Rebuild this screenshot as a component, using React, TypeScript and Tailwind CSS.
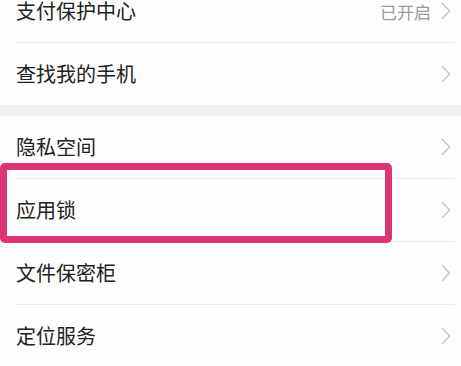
import React from "react";

const Chevron = () => (
  <svg width="10" height="18" viewBox="0 0 10 18" fill="none">
    <path d="M1.5 1.5 L8.5 9 L1.5 16.5" stroke="#c9c9c9" strokeWidth="1.6" strokeLinecap="round" strokeLinejoin="round" />
  </svg>
);

type RowProps = { title: string; value?: string; divider?: boolean; first?: boolean };

const Row = ({ title, value, divider = true, first }: RowProps) => (
  <div className={first ? "-mt-[20px]" : ""}>
    <div className="flex items-center justify-between h-[62px] pl-4 pr-[10px]">
      <span className="text-[20px] leading-[20px] text-[#222]">{title}</span>
      <div className="flex items-center gap-[10px]">
        {value && <span className="text-[17px] leading-[17px] text-[#9a9a9a]">{value}</span>}
        <Chevron />
      </div>
    </div>
    {divider && <div className="h-px bg-[#ebebeb] ml-4 mr-[6px]" />}
  </div>
);

export default function App() {
  return (
    <div
      className="relative w-[461px] h-[366px] overflow-hidden bg-[#fdfdfd]"
      style={{ fontFamily: '"Noto Sans CJK SC", "Noto Sans", sans-serif' }}
    >
      <Row first title="支付保护中心" value="已开启" />
      <Row title="查找我的手机" divider={false} />
      <div className="h-[11px] bg-[#f1f1f1]" />
      <Row title="隐私空间" />
      <Row title="应用锁" />
      <Row title="文件保密柜" />
      <Row title="定位服务" />

      {/* highlight box */}
      <div className="absolute left-0 top-[163px] w-[392px] h-[80px] border-[7px] border-[#db3573] rounded-[5px]" />
    </div>
  );
}
